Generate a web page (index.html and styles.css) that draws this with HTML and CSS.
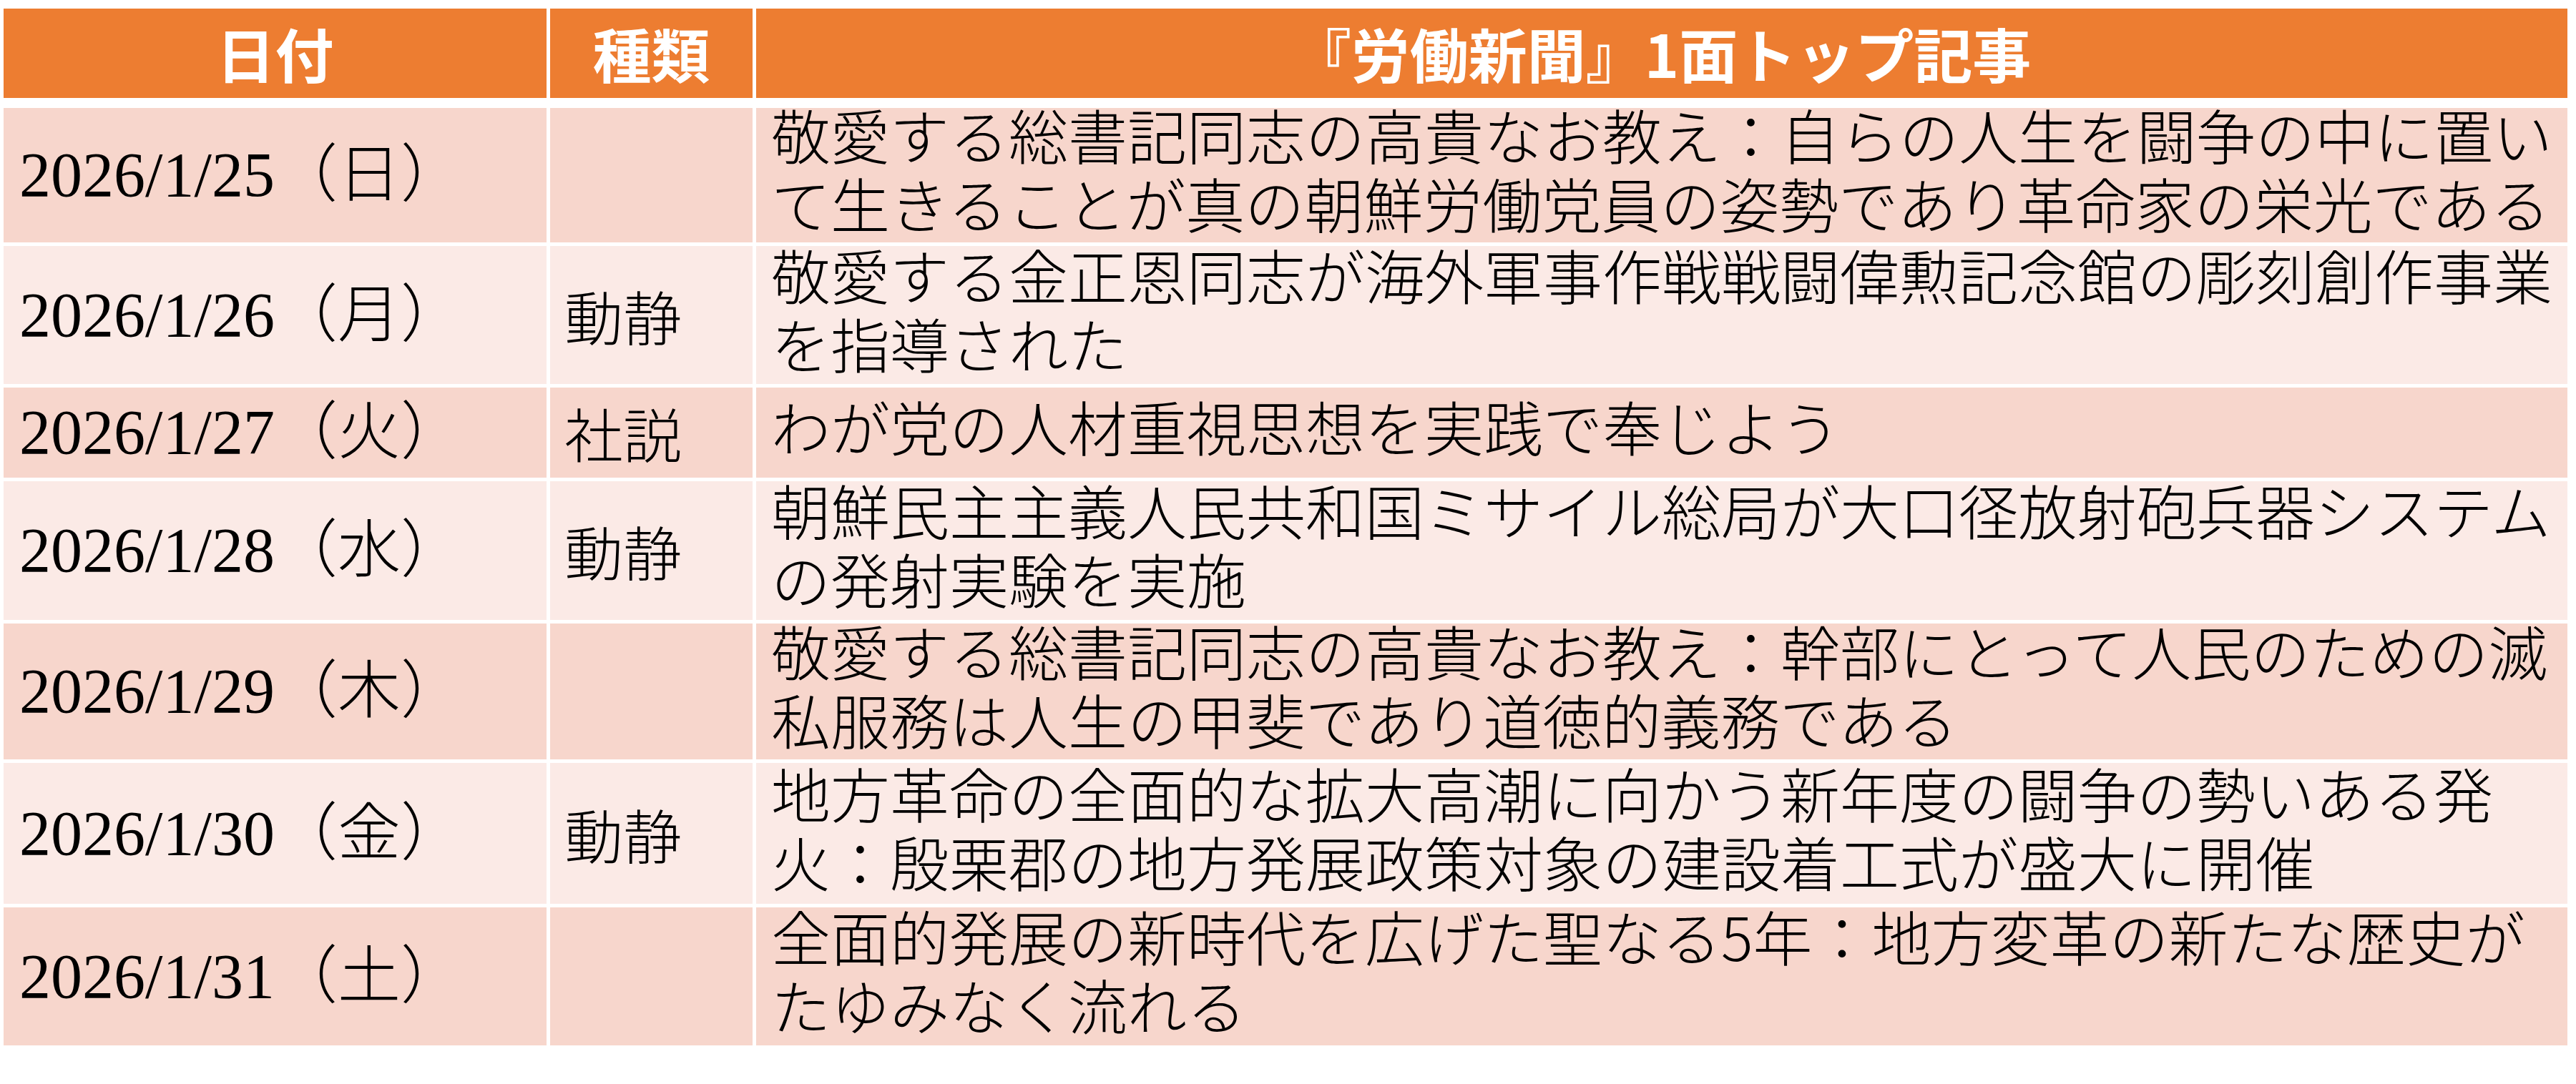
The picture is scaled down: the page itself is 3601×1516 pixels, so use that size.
FILE: index.html
```html
<!DOCTYPE html>
<html lang="ja">
<head>
<meta charset="utf-8">
<title>『労働新聞』1面トップ記事</title>
<link rel="stylesheet" href="styles.css">
</head>
<body>
<div class="news">
  <div class="cell th">日付</div>
  <div class="cell th">種類</div>
  <div class="cell th">『労働新聞』1面トップ記事</div>

  <div class="cell odd date">2026/1/25（日）</div>
  <div class="cell odd kind"></div>
  <div class="cell odd title"><p>敬愛する総書記同志の高貴なお教え：自らの人生を闘争の中に置いて生きることが真の朝鮮労働党員の姿勢であり革命家の栄光である</p></div>

  <div class="cell even date">2026/1/26（月）</div>
  <div class="cell even kind">動静</div>
  <div class="cell even title"><p>敬愛する金正恩同志が海外軍事作戦戦闘偉勲記念館の彫刻創作事業を指導された</p></div>

  <div class="cell odd date">2026/1/27（火）</div>
  <div class="cell odd kind">社説</div>
  <div class="cell odd title"><p>わが党の人材重視思想を実践で奉じよう</p></div>

  <div class="cell even date">2026/1/28（水）</div>
  <div class="cell even kind">動静</div>
  <div class="cell even title"><p>朝鮮民主主義人民共和国ミサイル総局が大口径放射砲兵器システムの発射実験を実施</p></div>

  <div class="cell odd date">2026/1/29（木）</div>
  <div class="cell odd kind"></div>
  <div class="cell odd title"><p>敬愛する総書記同志の高貴なお教え：幹部にとって人民のための滅私服務は人生の甲斐であり道徳的義務である</p></div>

  <div class="cell even date">2026/1/30（金）</div>
  <div class="cell even kind">動静</div>
  <div class="cell even title"><p>地方革命の全面的な拡大高潮に向かう新年度の闘争の勢いある発火：殷栗郡の地方発展政策対象の建設着工式が盛大に開催</p></div>

  <div class="cell odd date">2026/1/31（土）</div>
  <div class="cell odd kind"></div>
  <div class="cell odd title"><p>全面的発展の新時代を広げた聖なる5年：地方変革の新たな歴史がたゆみなく流れる</p></div>
</div>
</body>
</html>
```
FILE: styles.css
```css
html, body {
  margin: 0;
  padding: 0;
  background: #ffffff;
}

body {
  font-family: "Noto Sans CJK JP", "Noto Sans", sans-serif;
  color: #000000;
}

.news {
  display: grid;
  grid-template-columns: 759px 283px 2532px;
  grid-template-rows: 134px 188px 193px 126px 194px 190px 197px 193px;
  column-gap: 5px;
  row-gap: 5px;
  margin: 12px 0 0 5px;
  width: 3584px;
}

.cell {
  box-sizing: border-box;
  display: flex;
  align-items: center;
  min-width: 0;
}

.th {
  background: #ed7d31;
  background-clip: padding-box;
  border-bottom: 9px solid #ffffff;
  color: #ffffff;
  font-family: "Noto Sans CJK JP", sans-serif;
  font-weight: 700;
  font-size: 82px;
  line-height: 100px;
  justify-content: center;
  padding-bottom: 2px;
  white-space: nowrap;
}

.odd { background: #f7d6cc; }
.even { background: #fbeae6; }

.date {
  font-family: "Liberation Serif", "Noto Sans CJK JP", serif;
  font-size: 88px;
  font-weight: 300;
  line-height: 100px;
  padding-left: 22px;
  white-space: nowrap;
}

.kind {
  font-family: "Noto Sans CJK JP", sans-serif;
  font-size: 82px;
  font-weight: 300;
  line-height: 100px;
  padding-left: 20px;
  white-space: nowrap;
}

.title {
  font-family: "Noto Sans CJK JP", sans-serif;
  font-size: 83px;
  font-weight: 300;
  line-height: 96px;
  padding: 0 10px 20px 21px;
}

.title p {
  margin: 0;
}
```
